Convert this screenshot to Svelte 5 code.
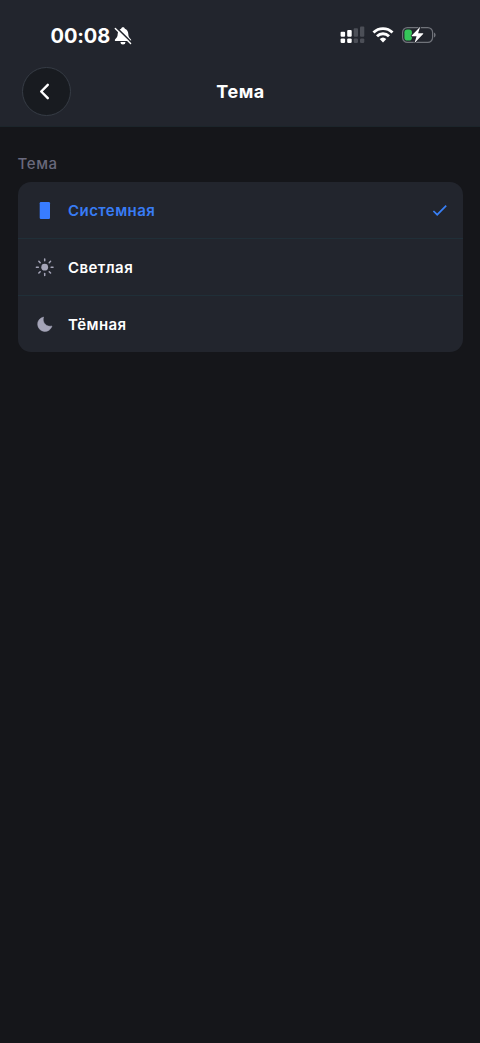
<script>
    const themes = [
        { id: 'system', label: 'Системная' },
        { id: 'light', label: 'Светлая' },
        { id: 'dark', label: 'Тёмная' },
    ];
    const rays = [0, 45, 90, 135, 180, 225, 270, 315];

    let selected = $state('system');
</script>

<div class="screen">
    <header>
        <div class="status-bar">
            <div class="clock">
                <span class="time">00:08</span>
                <svg width="18" height="18" viewBox="0 0 18 18">
                    <path d="M9 .3c-1 0-1.700.6-1.800 1.400C4.900 2.500 3.800 4.500 3.700 7c-.1 2.700-.9 3.800-2.300 5-1 .9-.7 2.100.6 2.100h14c1.300 0 1.600-1.200.6-2.100-1.400-1.200-2.200-2.300-2.300-5C14.200 4.500 13.100 2.500 10.800 1.700 10.700.9 10 .3 9 .3zM6.500 14.900a2.500 2.500 0 0 0 5 0z" fill="#fff" />
                    <path d="M2.300.4 18 16" stroke="#22252d" stroke-width="1.700" />
                    <path d="M1.300 1.400 16.600 16.500" stroke="#fff" stroke-width="1.400" stroke-linecap="round" />
                </svg>
            </div>
            <div class="indicators">
                <svg width="25" height="18" viewBox="0 0 25 18">
                    <g fill="#fff">
                        <rect x=".6" y="5.700" width="4.500" height="5" rx="1" />
                        <rect x="7.200" y="4" width="4.500" height="6.700" rx="1" />
                        <rect x=".6" y="12.400" width="4.500" height="4.600" rx="1.200" />
                        <rect x="7.200" y="12.400" width="4.500" height="4.600" rx="1.200" />
                    </g>
                    <g fill="#4c4f57">
                        <rect x="13.700" y="2.200" width="4.300" height="8.500" rx="1" />
                        <rect x="20" y=".4" width="4.300" height="10.300" rx="1" />
                        <rect x="13.700" y="12.400" width="4.300" height="4.600" rx="1.200" />
                        <rect x="20" y="12.400" width="4.300" height="4.600" rx="1.200" />
                    </g>
                </svg>
                <svg class="wifi" width="22" height="16" viewBox="0 0 22 16">
                    <g fill="none" stroke="#fff" stroke-width="2.900">
                        <path d="M1.500 5.500a13.700 13.700 0 0 1 19 0" />
                        <path d="M5 9.200a8.600 8.600 0 0 1 12 0" />
                    </g>
                    <path d="M7.700 12a4.800 4.800 0 0 1 6.600 0L11 15.400z" fill="#fff" />
                </svg>
                <svg class="battery" width="34" height="18" viewBox="0 0 34 18">
                    <rect x=".6" y="1.600" width="30" height="14.800" rx="4.800" fill="none" stroke="#70737a" stroke-width="1.200" />
                    <path d="M32 6.500c2.100.7 2.100 4.300 0 5z" fill="#70737a" />
                    <rect x="2.400" y="3.400" width="7.500" height="11.200" rx="2.800" fill="#35c759" />
                    <path d="M18.200.8 9.700 9.400c-.3.4-.1.9.4.9h4.500l-2.200 7 8.700-9.200c.4-.4.1-.9-.4-.9h-4.600z" fill="#fff" stroke="#22252d" stroke-width="1.600" paint-order="stroke" />
                </svg>
            </div>
        </div>
        <div class="nav-bar">
            <button class="back" aria-label="Назад">
                <svg width="47" height="47" viewBox="0 0 47 47">
                    <path d="M24.800 16.800 18.200 23.500l6.600 6.700" fill="none" stroke="#fff" stroke-width="2.400" stroke-linecap="round" stroke-linejoin="round" />
                </svg>
            </button>
            <h1>Тема</h1>
        </div>
    </header>

    <main>
        <h2>Тема</h2>
        <div class="list">
            {#each themes as theme}
                <button class="row" class:active={selected === theme.id} onclick={() => (selected = theme.id)}>
                    <svg width="20" height="20" viewBox="0 0 20 20">
                        {#if theme.id === 'system'}
                            <rect x="4.700" y="2" width="10.300" height="17" rx="1.200" fill="#387cff" />
                        {:else if theme.id === 'light'}
                            <circle cx="9.700" cy="10.200" r="3.400" fill="#a5a5b8" />
                            {#each rays as angle}
                                <path d="M9.700 1.900v1.900" transform="rotate({angle} 9.700 10.200)" stroke="#a5a5b8" stroke-width="1.500" stroke-linecap="round" />
                            {/each}
                        {:else}
                            <path d="M8.600 3A7.300 7.300 0 1 0 17 12C11.500 13.500 6.800 8.400 8.600 3z" fill="#a5a5b8" stroke="#a5a5b8" stroke-width=".5" stroke-linejoin="round" />
                        {/if}
                    </svg>
                    <span class="label">{theme.label}</span>
                    {#if selected === theme.id}
                        <svg width="16" height="16" viewBox="0 0 16 16">
                            <path d="M1.400 9 5.200 12.700 14.200 3.600" fill="none" stroke="#387ff5" stroke-width="1.700" />
                        </svg>
                    {/if}
                </button>
            {/each}
        </div>
    </main>
</div>

<style>
:global(body) {
    margin: 0;
    background: #15161a;
}
.screen {
    min-height: 1043px;
    background: #15161a;
    color: #fff;
    font-family: Inter, 'Liberation Sans', sans-serif;
}
header {
    box-sizing: border-box;
    height: 127px;
    background: #22252d;
    border-bottom: 1px solid #1c252b;
}
.status-bar {
    display: flex;
    justify-content: space-between;
    box-sizing: border-box;
    height: 67px;
    padding: 26px 44px 0 50.500px;
}
.clock {
    display: flex;
    align-items: center;
    gap: 4px;
    height: 19px;
}
.time {
    padding-top: 1px;
    font-size: 20px;
    font-weight: 700;
    line-height: 19px;
    letter-spacing: -0.1px;
}
.indicators {
    display: flex;
    align-items: center;
    height: 18px;
}
.wifi {
    margin-left: 7px;
}
.battery {
    margin-left: 8px;
}
.nav-bar {
    display: grid;
    grid-template-columns: 49px 1fr 49px;
    align-items: center;
    padding: 0 20.500px 0 21.500px;
}
button {
    padding: 0;
    border: none;
    background: none;
    color: inherit;
    font: inherit;
    text-align: left;
}
.back {
    display: flex;
    align-items: center;
    justify-content: center;
    box-sizing: border-box;
    width: 49px;
    height: 49px;
    border: 1px solid #363c45;
    border-radius: 50%;
    background: #181b20;
}
h1 {
    margin: 0;
    padding-top: 1px;
    font-size: 18px;
    font-weight: 700;
    line-height: 24px;
    letter-spacing: 0.5px;
    text-align: center;
}
main {
    padding: 27px 17.500px 0;
}
h2 {
    margin: 0 0 8px;
    color: #69697c;
    font-size: 15px;
    font-weight: 500;
    line-height: 20px;
    letter-spacing: 0.6px;
}
.list {
    overflow: hidden;
    border-radius: 13px;
    background: #22252d;
}
.row {
    display: flex;
    align-items: center;
    box-sizing: border-box;
    width: 100%;
    height: 56px;
    padding: 0 15px 0 17.500px;
}
.row + .row {
    height: 57px;
    border-top: 1px solid #202f38;
}
.label {
    flex: 1;
    margin-left: 13px;
    padding-top: 1px;
    font-size: 15px;
    font-weight: 600;
    letter-spacing: 0.45px;
}
.active {
    color: #387cf5;
}
</style>
